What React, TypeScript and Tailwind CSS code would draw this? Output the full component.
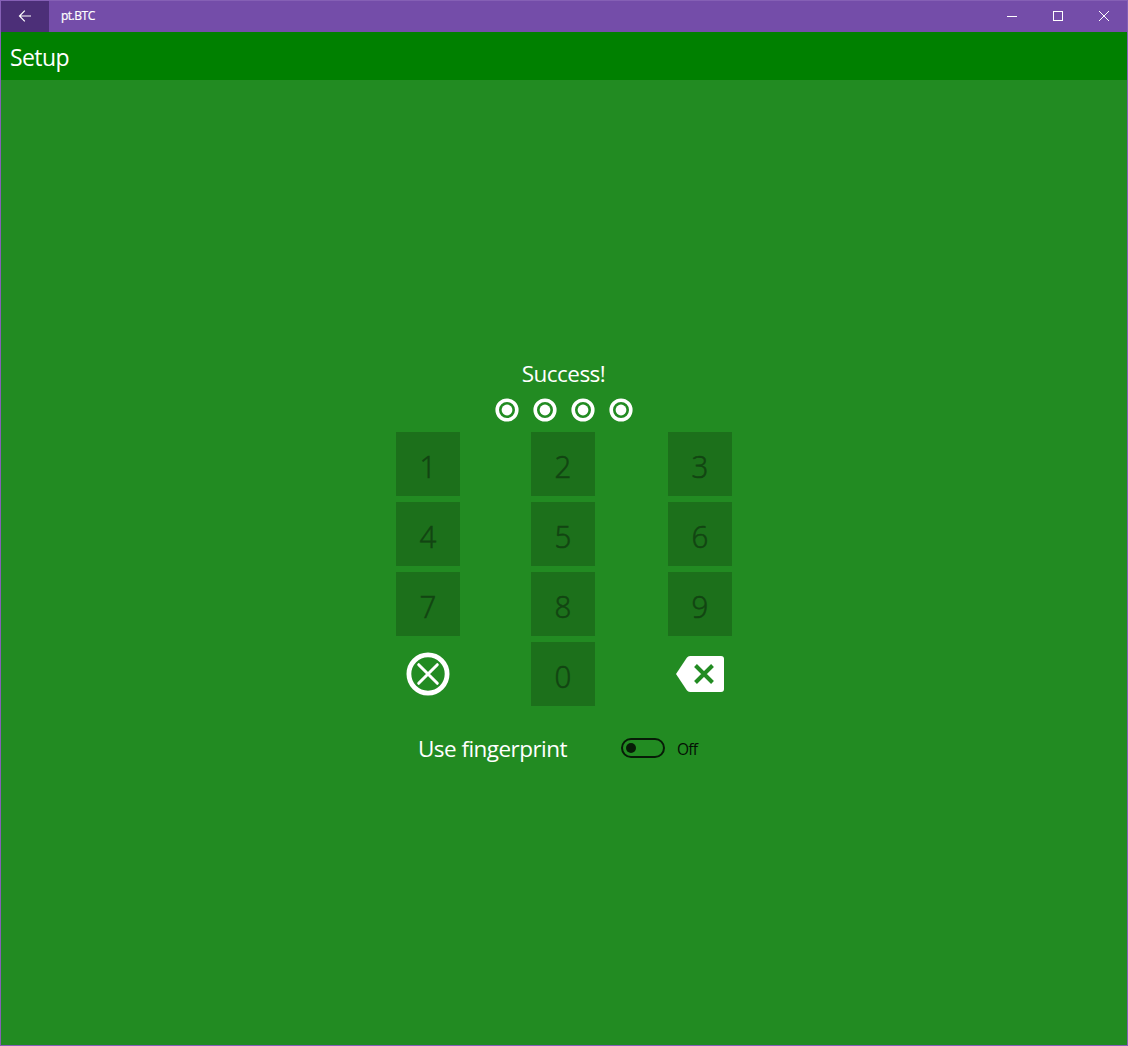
import React from 'react';

function BackArrow() {
  return (
    <svg width="14" height="12" viewBox="0 0 14 12" fill="none" stroke="#fff" strokeWidth="1.2">
      <path d="M1.5 6H13M6.8 0.7L1.5 6L6.8 11.3" />
    </svg>
  );
}

function TitleBar() {
  return (
    <div className="flex h-[31px] shrink-0 bg-[#744da9] text-white">
      <button className="flex w-12 items-center justify-center bg-[#4c2f78] pb-px">
        <BackArrow />
      </button>
      <div className="pl-3 text-[12px] leading-[30px] tracking-[-0.5px] [-webkit-text-stroke:0.2px_#fff]">pt.BTC</div>
      <div className="ml-auto flex">
        <button className="flex w-[46px] items-center justify-center pb-px">
          <svg width="10" height="10" viewBox="0 0 10 10" shapeRendering="crispEdges">
            <rect y="5" width="10" height="1" fill="#fff" />
          </svg>
        </button>
        <button className="flex w-[46px] items-center justify-center pb-px">
          <svg width="10" height="10" viewBox="0 0 10 10" fill="none" stroke="#fff">
            <rect x="0.5" y="0.5" width="9" height="9" />
          </svg>
        </button>
        <button className="flex w-[46px] items-center justify-center pb-px">
          <svg width="10" height="10" viewBox="0 0 10 10" fill="none" stroke="#fff">
            <path d="M0 0L10 10M10 0L0 10" />
          </svg>
        </button>
      </div>
    </div>
  );
}

function PinDot() {
  return (
    <svg width="24" height="24" viewBox="0 0 24 24">
      <circle cx="12" cy="12" r="9.8" fill="none" stroke="#fff" strokeWidth="3.6" />
      <circle cx="12" cy="12" r="5.4" fill="#fff" />
    </svg>
  );
}

function Key({ label }: { label: string }) {
  return (
    <button className="flex h-16 w-16 items-start justify-center bg-[#1c701b] pt-1 pr-px text-[31px] font-light leading-[60px] text-[#124512] [-webkit-text-stroke:0.6px_#124512]">
      <span className="scale-x-95">{label}</span>
    </button>
  );
}

function ClearKey() {
  return (
    <button className="h-16 w-16">
      <svg width="64" height="64" viewBox="0 0 64 64" fill="none" stroke="#fff">
        <circle cx="32" cy="32" r="19.1" strokeWidth="4.8" />
        <path d="M22.7 22.7L41.3 41.3M41.3 22.7L22.7 41.3" strokeWidth="3" strokeLinecap="round" />
      </svg>
    </button>
  );
}

function BackspaceKey() {
  return (
    <button className="h-16 w-16">
      <svg width="64" height="64" viewBox="0 0 64 64" fill="none">
        <path d="M8 32L18.8 15.7Q20 14 22 14H53Q56 14 56 17V47Q56 50 53 50H22Q20 50 18.8 48.3Z" fill="#fff" />
        <path d="M27.5 23.5L44.5 40.5M44.5 23.5L27.5 40.5" stroke="#228b22" strokeWidth="4" />
      </svg>
    </button>
  );
}

export default function App() {
  return (
    <div className="flex h-[1046px] w-[1128px] flex-col border border-[#8560b5] bg-[#228b22] font-['Open_Sans','Noto_Sans',sans-serif]">
      <TitleBar />
      <header className="h-12 shrink-0 bg-[#008000] pl-[9px] text-[23px] leading-[51px] tracking-[-0.6px] text-white">
        Setup
      </header>
      <main className="flex flex-col items-center pt-[276px]">
        <div className="h-[42px] pr-px text-[22.5px] leading-[36px] tracking-[-0.55px] text-white">Success!</div>
        <div className="flex h-[34px] gap-3.5">
          <PinDot />
          <PinDot />
          <PinDot />
          <PinDot />
        </div>
        <div className="grid w-[336px] grid-cols-[135px_137px_64px] gap-y-1.5">
          {['1', '2', '3', '4', '5', '6', '7', '8', '9'].map((n) => (
            <Key key={n} label={n} />
          ))}
          <ClearKey />
          <Key label="0" />
          <BackspaceKey />
        </div>
        <div className="flex w-[336px] items-center pt-[21px]">
          <div className="w-[225px] pl-[22px] pt-0.5 pb-px text-[22.5px] leading-[39px] tracking-[-0.55px] text-white">
            Use fingerprint
          </div>
          <button className="flex h-5 w-11 shrink-0 items-center rounded-full border-2 border-[#071c07] pl-[3px]">
            <span className="h-2.5 w-2.5 rounded-full bg-[#071c07]" />
          </button>
          <div className="pl-3 pt-0.5 text-[15.5px] leading-5 tracking-[-0.7px] text-[#041004]">Off</div>
        </div>
      </main>
    </div>
  );
}
